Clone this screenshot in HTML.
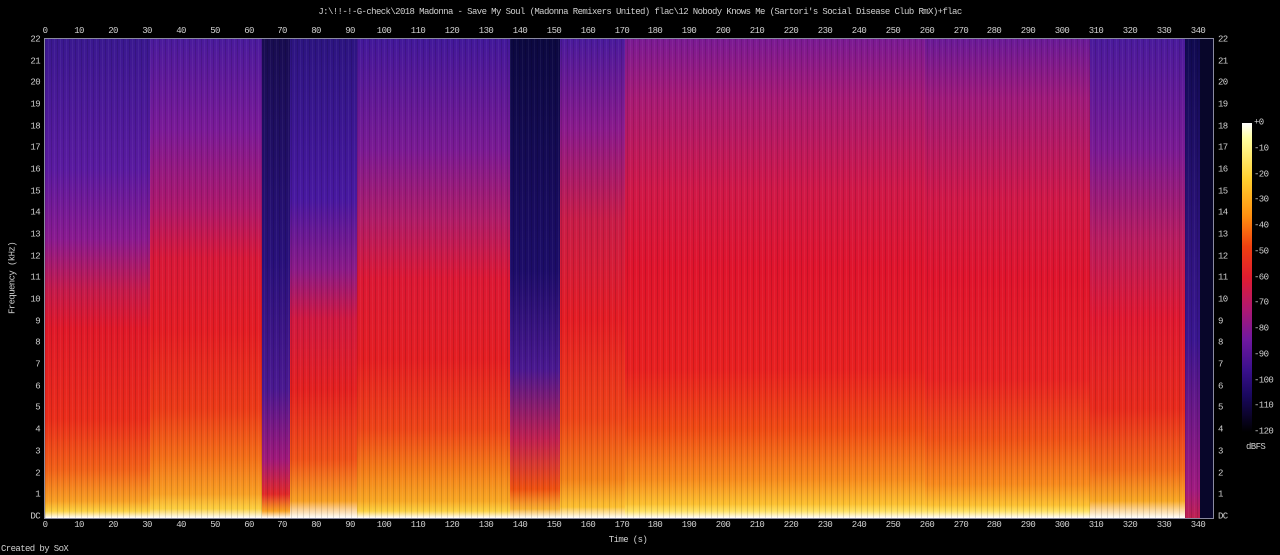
<!DOCTYPE html>
<html><head><meta charset="utf-8"><style>
html,body{margin:0;padding:0;background:#000;width:1280px;height:555px;overflow:hidden;position:relative}
body{font-family:"Liberation Mono",monospace;font-size:9px;color:#d0d0d0;letter-spacing:-0.6px}
.s{position:absolute;top:39px;height:479px}
.t{position:absolute;white-space:nowrap;line-height:9px}
.tx{transform:translateX(-50%)}
.yl{position:absolute;right:1240px;transform:translateY(-50%);line-height:9px}
.yr{position:absolute;left:1218px;transform:translateY(-50%);line-height:9px}
.cl{position:absolute;left:1254px;transform:translateY(-50%);line-height:9px}
</style></head><body>
<div class="t tx" style="left:640px;top:8px">J:\!!-!-G-check\2018 Madonna - Save My Soul (Madonna Remixers United) flac\12 Nobody Knows Me (Sartori's Social Disease Club RmX)+flac</div>

<div class="s" style="left:45px;width:105px;background:linear-gradient(to bottom,#3a1890 0,#5a1aa0 130px,#8a1a90 200px,#c41a4c 250px,#e01828 290px,#ea2c1a 380px,#f26018 430px,#f8a024 462px,#fcd040 472px,#fff 479px)"></div>
<div class="s" style="left:150px;width:112px;background:linear-gradient(to bottom,#4a1a9c 0,#7a1a98 90px,#b0186a 170px,#d81838 220px,#e41c24 290px,#ec3a18 370px,#f47018 420px,#f8a024 455px,#fcd040 470px,#fff 479px)"></div>
<div class="s" style="left:262px;width:28px;background:linear-gradient(to bottom,#180c50 0,#28107a 220px,#4a1890 350px,#a0187a 420px,#e02828 455px,#f8a020 472px,#fff 479px)"></div>
<div class="s" style="left:290px;width:67px;background:linear-gradient(to bottom,#2c1480 0,#4818a0 160px,#8a1a88 230px,#d01840 280px,#e42020 350px,#f05018 420px,#f8a024 462px,#fff 479px)"></div>
<div class="s" style="left:357px;width:153px;background:linear-gradient(to bottom,#42189a 0,#7a1a94 110px,#b01c68 180px,#dc1834 240px,#e41e22 320px,#ee4418 390px,#f47a18 430px,#f8a824 462px,#fcd040 472px,#fff 479px)"></div>
<div class="s" style="left:510px;width:50px;background:linear-gradient(to bottom,#0c0840 0,#1c0c68 230px,#4a1890 330px,#c02050 400px,#ee5010 450px,#f8b030 470px,#fff 479px)"></div>
<div class="s" style="left:560px;width:65px;background:linear-gradient(to bottom,#4a1a9c 0,#8a1a8c 90px,#c81c48 180px,#e41c24 280px,#ee4418 380px,#f48018 440px,#fcc030 468px,#fff 479px)"></div>
<div class="s" style="left:625px;width:300px;background:linear-gradient(to bottom,#7a1a94 0,#a81a74 60px,#d01848 150px,#e0142c 230px,#e82020 330px,#f04a14 390px,#f88a1c 440px,#fcc030 465px,#ffe060 472px,#fff 479px)"></div>
<div class="s" style="left:925px;width:165px;background:linear-gradient(to bottom,#6a1a98 0,#a01a7a 60px,#d01848 160px,#e0142c 240px,#e82222 340px,#f05016 400px,#f88a1c 445px,#fcc030 466px,#ffe060 472px,#fff 479px)"></div>
<div class="s" style="left:1090px;width:95px;background:linear-gradient(to bottom,#4a1a9c 0,#7a1a94 110px,#b81c60 200px,#e01830 280px,#e82a1c 370px,#f26818 430px,#f8a824 462px,#fff 479px)"></div>
<div class="s" style="left:1185px;width:15px;background:linear-gradient(to bottom,#100a50 0,#3a1690 300px,#a01a80 450px,#c02050 479px)"></div>
<div class="s" style="left:1200px;width:13px;background:#08062a"></div>
<div class="s" style="left:45px;width:1155px;background:repeating-linear-gradient(90deg,rgba(0,0,0,.12) 0 1px,transparent 1px 3px,rgba(255,255,255,.05) 3px 4px,transparent 4px 6px)"></div>
<div style="position:absolute;left:44px;top:38px;width:1168px;height:479px;border:1px solid #8a8aa0"></div>

<div class="t tx" style="top:27px;left:45px">0</div><div class="t tx" style="top:27px;left:79px">10</div><div class="t tx" style="top:27px;left:113px">20</div><div class="t tx" style="top:27px;left:147px">30</div><div class="t tx" style="top:27px;left:181px">40</div><div class="t tx" style="top:27px;left:215px">50</div><div class="t tx" style="top:27px;left:249px">60</div><div class="t tx" style="top:27px;left:282px">70</div><div class="t tx" style="top:27px;left:316px">80</div><div class="t tx" style="top:27px;left:350px">90</div><div class="t tx" style="top:27px;left:384px">100</div><div class="t tx" style="top:27px;left:418px">110</div><div class="t tx" style="top:27px;left:452px">120</div><div class="t tx" style="top:27px;left:486px">130</div><div class="t tx" style="top:27px;left:520px">140</div><div class="t tx" style="top:27px;left:554px">150</div><div class="t tx" style="top:27px;left:588px">160</div><div class="t tx" style="top:27px;left:622px">170</div><div class="t tx" style="top:27px;left:655px">180</div><div class="t tx" style="top:27px;left:689px">190</div><div class="t tx" style="top:27px;left:723px">200</div><div class="t tx" style="top:27px;left:757px">210</div><div class="t tx" style="top:27px;left:791px">220</div><div class="t tx" style="top:27px;left:825px">230</div><div class="t tx" style="top:27px;left:859px">240</div><div class="t tx" style="top:27px;left:893px">250</div><div class="t tx" style="top:27px;left:927px">260</div><div class="t tx" style="top:27px;left:961px">270</div><div class="t tx" style="top:27px;left:994px">280</div><div class="t tx" style="top:27px;left:1028px">290</div><div class="t tx" style="top:27px;left:1062px">300</div><div class="t tx" style="top:27px;left:1096px">310</div><div class="t tx" style="top:27px;left:1130px">320</div><div class="t tx" style="top:27px;left:1164px">330</div><div class="t tx" style="top:27px;left:1198px">340</div>

<div class="t tx" style="top:521px;left:45px">0</div><div class="t tx" style="top:521px;left:79px">10</div><div class="t tx" style="top:521px;left:113px">20</div><div class="t tx" style="top:521px;left:147px">30</div><div class="t tx" style="top:521px;left:181px">40</div><div class="t tx" style="top:521px;left:215px">50</div><div class="t tx" style="top:521px;left:249px">60</div><div class="t tx" style="top:521px;left:282px">70</div><div class="t tx" style="top:521px;left:316px">80</div><div class="t tx" style="top:521px;left:350px">90</div><div class="t tx" style="top:521px;left:384px">100</div><div class="t tx" style="top:521px;left:418px">110</div><div class="t tx" style="top:521px;left:452px">120</div><div class="t tx" style="top:521px;left:486px">130</div><div class="t tx" style="top:521px;left:520px">140</div><div class="t tx" style="top:521px;left:554px">150</div><div class="t tx" style="top:521px;left:588px">160</div><div class="t tx" style="top:521px;left:622px">170</div><div class="t tx" style="top:521px;left:655px">180</div><div class="t tx" style="top:521px;left:689px">190</div><div class="t tx" style="top:521px;left:723px">200</div><div class="t tx" style="top:521px;left:757px">210</div><div class="t tx" style="top:521px;left:791px">220</div><div class="t tx" style="top:521px;left:825px">230</div><div class="t tx" style="top:521px;left:859px">240</div><div class="t tx" style="top:521px;left:893px">250</div><div class="t tx" style="top:521px;left:927px">260</div><div class="t tx" style="top:521px;left:961px">270</div><div class="t tx" style="top:521px;left:994px">280</div><div class="t tx" style="top:521px;left:1028px">290</div><div class="t tx" style="top:521px;left:1062px">300</div><div class="t tx" style="top:521px;left:1096px">310</div><div class="t tx" style="top:521px;left:1130px">320</div><div class="t tx" style="top:521px;left:1164px">330</div><div class="t tx" style="top:521px;left:1198px">340</div>

<div class="t tx" style="top:536px;left:628px">Time (s)</div>
<div class="t" style="top:278px;left:13px;transform:translate(-50%,-50%) rotate(-90deg)">Frequency (kHz)</div>

<div class="yl" style="top:40px">22</div><div class="yl" style="top:62px">21</div><div class="yl" style="top:83px">20</div><div class="yl" style="top:105px">19</div><div class="yl" style="top:127px">18</div><div class="yl" style="top:148px">17</div><div class="yl" style="top:170px">16</div><div class="yl" style="top:192px">15</div><div class="yl" style="top:213px">14</div><div class="yl" style="top:235px">13</div><div class="yl" style="top:257px">12</div><div class="yl" style="top:278px">11</div><div class="yl" style="top:300px">10</div><div class="yl" style="top:322px">9</div><div class="yl" style="top:343px">8</div><div class="yl" style="top:365px">7</div><div class="yl" style="top:387px">6</div><div class="yl" style="top:408px">5</div><div class="yl" style="top:430px">4</div><div class="yl" style="top:452px">3</div><div class="yl" style="top:474px">2</div><div class="yl" style="top:495px">1</div><div class="yl" style="top:517px">DC</div>
<div class="yr" style="top:40px">22</div><div class="yr" style="top:62px">21</div><div class="yr" style="top:83px">20</div><div class="yr" style="top:105px">19</div><div class="yr" style="top:127px">18</div><div class="yr" style="top:148px">17</div><div class="yr" style="top:170px">16</div><div class="yr" style="top:192px">15</div><div class="yr" style="top:213px">14</div><div class="yr" style="top:235px">13</div><div class="yr" style="top:257px">12</div><div class="yr" style="top:278px">11</div><div class="yr" style="top:300px">10</div><div class="yr" style="top:322px">9</div><div class="yr" style="top:343px">8</div><div class="yr" style="top:365px">7</div><div class="yr" style="top:387px">6</div><div class="yr" style="top:408px">5</div><div class="yr" style="top:430px">4</div><div class="yr" style="top:452px">3</div><div class="yr" style="top:474px">2</div><div class="yr" style="top:495px">1</div><div class="yr" style="top:517px">DC</div>

<div style="position:absolute;left:1242px;top:123px;width:10px;height:309px;background:linear-gradient(to bottom,#fff 0,#ffffa0 5%,#ffd030 18%,#ff9010 30%,#f04010 40%,#e01c30 50%,#b01870 60%,#7018a0 70%,#3a108c 80%,#1a0860 88%,#000 100%)"></div>
<div class="cl" style="top:123px">+0</div><div class="cl" style="top:149px">-10</div><div class="cl" style="top:175px">-20</div><div class="cl" style="top:200px">-30</div><div class="cl" style="top:226px">-40</div><div class="cl" style="top:252px">-50</div><div class="cl" style="top:278px">-60</div><div class="cl" style="top:303px">-70</div><div class="cl" style="top:329px">-80</div><div class="cl" style="top:355px">-90</div><div class="cl" style="top:381px">-100</div><div class="cl" style="top:406px">-110</div><div class="cl" style="top:432px">-120</div>
<div class="t" style="top:443px;left:1246px">dBFS</div>
<div class="t" style="top:545px;left:1px">Created by SoX</div>
</body></html>
